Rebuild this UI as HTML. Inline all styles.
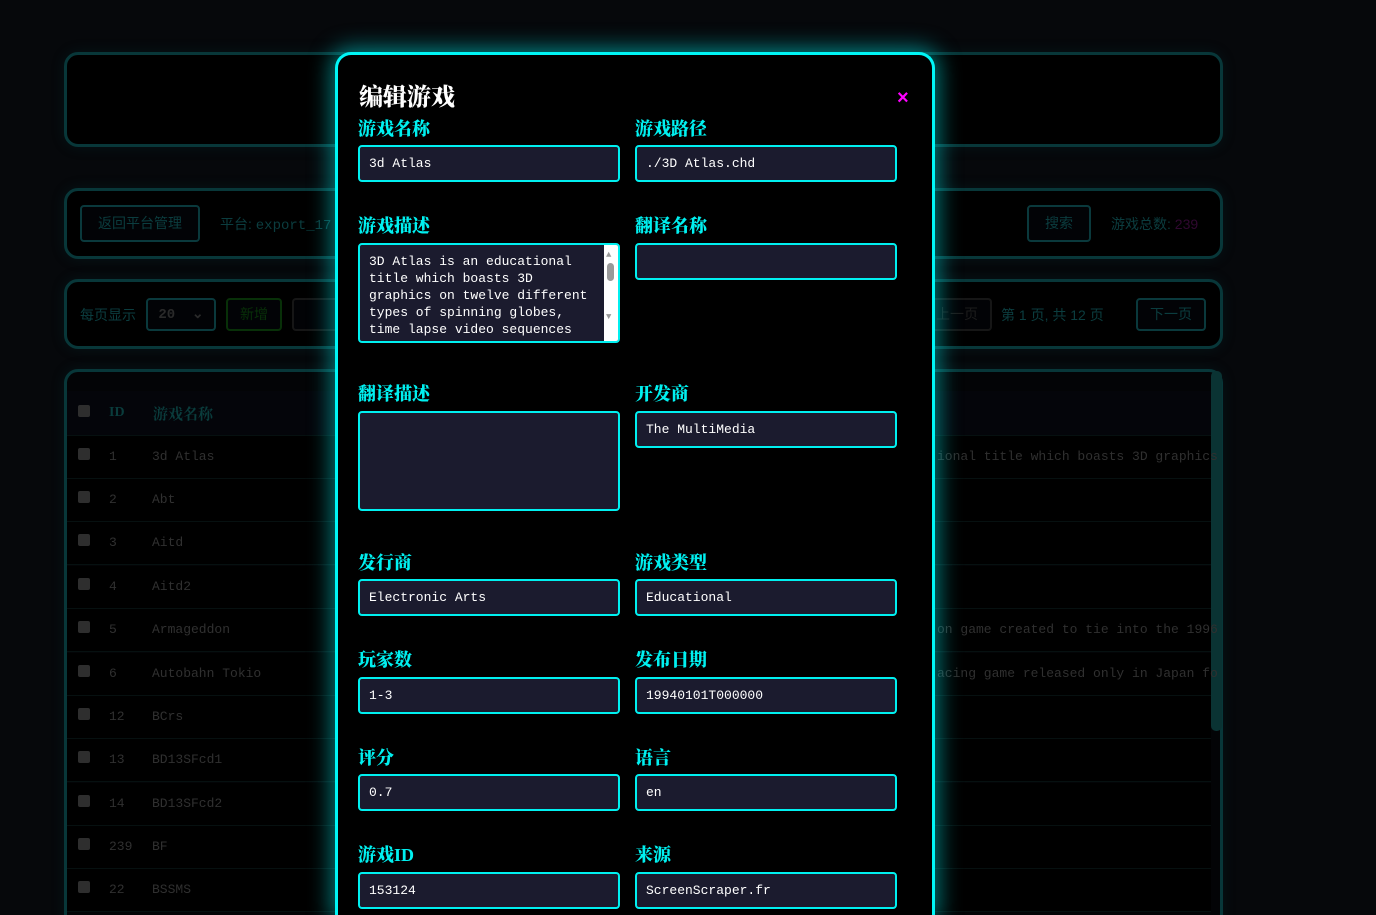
<!DOCTYPE html>
<html><head><meta charset="utf-8">
<style>
*{box-sizing:border-box;margin:0;padding:0}
html,body{width:1376px;height:915px;overflow:hidden;background:#06080b;font-family:"Liberation Mono","Noto Sans CJK SC",monospace}
#wrap{position:relative;width:1376px;height:915px;overflow:hidden}
.abs{position:absolute}
.panel{position:absolute;background:#000;border:3px solid #083739;border-radius:14px;box-shadow:0 0 14px rgba(0,80,80,.18)}
.btn{position:absolute;border:2px solid #0a393c;border-radius:4px;color:#0b3d3f;font-size:14px;font-family:"Liberation Sans","Noto Sans CJK SC",sans-serif;text-align:center;background:#020306}
.dim{color:#0b3d3f;font-size:14px}
.row{position:absolute;left:67px;width:1144px;height:43px;border-bottom:1px solid #061010;background:#000}
.cb{position:absolute;left:11px;top:12px;width:12px;height:12px;background:#2e2e2e;border-radius:2px}
.rid{position:absolute;left:42px;top:13px;color:#303030;font-size:13px}
.rname{position:absolute;left:85px;top:13px;color:#303030;font-size:13px;white-space:nowrap}
.modal{position:absolute;left:335px;top:52px;width:600px;height:863px;background:#000;border:3px solid #00f6f6;border-bottom:none;border-radius:16px 16px 0 0;box-shadow:0 0 22px 4px rgba(0,240,240,.5)}
.lab{position:absolute;color:#00f0f0;font-family:"Liberation Serif","Noto Serif CJK SC",serif;font-weight:900;font-size:18px}
.inp{position:absolute;width:262px;height:37px;background:#1b1b2e;border:2px solid #00f0f0;border-radius:4px;color:#fff;font-size:13px;padding:9px 0 0 9px;white-space:pre;overflow:hidden}
.ta{height:100px}
</style></head><body><div id="wrap">
<div class="panel" style="left:64px;top:52px;width:1159px;height:95px"></div>
<div class="abs" style="left:578px;top:80px;font-size:30px;color:#0e0e0e;font-family:'Liberation Serif','Noto Serif CJK SC',serif;font-weight:bold">游戏列表</div>
<div class="panel" style="left:64px;top:188px;width:1159px;height:71px"></div>
<div class="btn" style="left:80px;top:205px;width:120px;height:37px;line-height:33px">返回平台管理</div>
<div class="abs dim" style="left:220px;top:214px"><span style="font-family:'Liberation Sans','Noto Sans CJK SC'">平台: </span>export_17</div>
<div class="btn" style="left:1027px;top:205px;width:64px;height:37px;line-height:33px">搜索</div>
<div class="abs dim" style="left:1111px;top:214px;font-family:'Liberation Sans','Noto Sans CJK SC'">游戏总数: <span style="color:#300830">239</span></div>
<div class="panel" style="left:64px;top:279px;width:1159px;height:70px"></div>
<div class="abs dim" style="left:80px;top:305px;font-family:'Liberation Sans','Noto Sans CJK SC'">每页显示</div>
<div class="btn" style="left:146px;top:298px;width:70px;height:33px;line-height:30px;color:#2a2a2a;font-family:'Liberation Mono';font-weight:bold">20 &nbsp;⌄</div>
<div class="btn" style="left:226px;top:298px;width:56px;height:33px;line-height:29px;border-color:#083008;color:#083008">新增</div>
<div class="btn" style="left:292px;top:298px;width:50px;height:33px;border-color:#161616"></div>
<div class="btn" style="left:922px;top:298px;width:70px;height:33px;line-height:29px;border-color:#161616;color:#1c1c1c">上一页</div>
<div class="abs dim" style="left:1001px;top:305px;font-family:'Liberation Sans','Noto Sans CJK SC'">第 1 页, 共 12 页</div>
<div class="btn" style="left:1136px;top:298px;width:70px;height:33px;line-height:29px">下一页</div>
<div class="panel" style="left:64px;top:369px;width:1159px;height:560px;background:#030406"></div>
<div class="abs" style="left:1211px;top:371px;width:11px;height:360px;background:#0a3333;border-radius:5px"></div>
<div class="abs" style="left:67px;top:391px;width:1144px;height:45px;background:#04050a;border-bottom:1px solid #061010"></div>
<div class="cb abs" style="left:78px;top:405px"></div>
<div class="abs" style="left:109px;top:405px;color:#0a3c3c;font-weight:bold;font-size:14px;font-family:'Liberation Serif'">ID</div>
<div class="abs" style="left:153px;top:403px;color:#0a3c3c;font-weight:bold;font-size:15px;font-family:'Liberation Serif','Noto Serif CJK SC',serif">游戏名称</div>
<div class="row" style="top:436px"><div class="cb"></div><div class="rid">1</div><div class="rname">3d Atlas</div><div class="rname" style="left:870px">ional title which boasts 3D graphics</div></div>
<div class="row" style="top:479px"><div class="cb"></div><div class="rid">2</div><div class="rname">Abt</div></div>
<div class="row" style="top:522px"><div class="cb"></div><div class="rid">3</div><div class="rname">Aitd</div></div>
<div class="row" style="top:566px"><div class="cb"></div><div class="rid">4</div><div class="rname">Aitd2</div></div>
<div class="row" style="top:609px"><div class="cb"></div><div class="rid">5</div><div class="rname">Armageddon</div><div class="rname" style="left:870px">on game created to tie into the 1996</div></div>
<div class="row" style="top:653px"><div class="cb"></div><div class="rid">6</div><div class="rname">Autobahn Tokio</div><div class="rname" style="left:870px">acing game released only in Japan fo</div></div>
<div class="row" style="top:696px"><div class="cb"></div><div class="rid">12</div><div class="rname">BCrs</div></div>
<div class="row" style="top:739px"><div class="cb"></div><div class="rid">13</div><div class="rname">BD13SFcd1</div></div>
<div class="row" style="top:783px"><div class="cb"></div><div class="rid">14</div><div class="rname">BD13SFcd2</div></div>
<div class="row" style="top:826px"><div class="cb"></div><div class="rid">239</div><div class="rname">BF</div></div>
<div class="row" style="top:869px"><div class="cb"></div><div class="rid">22</div><div class="rname">BSSMS</div></div>

<div class="modal"></div>
<div class="abs" style="left:359px;top:77px;color:#fff;font-family:'Liberation Serif','Noto Serif CJK SC',serif;font-weight:900;font-size:24px">编辑游戏</div>
<div class="abs" style="left:897px;top:87px;color:#ff00ff;font-family:'Liberation Sans';font-weight:bold;font-size:20px">×</div>

<div class="lab" style="left:358px;top:115px">游戏名称</div>
<div class="lab" style="left:635px;top:115px">游戏路径</div>
<div class="inp" style="left:358px;top:145px">3d Atlas</div>
<div class="inp" style="left:635px;top:145px">./3D Atlas.chd</div>

<div class="lab" style="left:358px;top:212px">游戏描述</div>
<div class="lab" style="left:635px;top:212px">翻译名称</div>
<div class="inp ta" style="left:358px;top:243px;padding-top:8px;line-height:17px;white-space:normal;padding-right:20px">3D Atlas is an educational title which boasts 3D graphics on twelve different types of spinning globes, time lapse video sequences
<div class="abs" style="right:0;top:0;width:14px;height:96px;background:#fff"><div class="abs" style="left:3px;top:18px;width:7px;height:18px;background:#999;border-radius:4px"></div><div class="abs" style="left:2px;top:2px;font-size:9px;color:#999">▲</div><div class="abs" style="left:2px;top:64px;font-size:9px;color:#999">▼</div></div></div>
<div class="inp" style="left:635px;top:243px"></div>

<div class="lab" style="left:358px;top:380px">翻译描述</div>
<div class="lab" style="left:635px;top:380px">开发商</div>
<div class="inp ta" style="left:358px;top:411px"></div>
<div class="inp" style="left:635px;top:411px">The MultiMedia</div>

<div class="lab" style="left:358px;top:549px">发行商</div>
<div class="lab" style="left:635px;top:549px">游戏类型</div>
<div class="inp" style="left:358px;top:579px">Electronic Arts</div>
<div class="inp" style="left:635px;top:579px">Educational</div>

<div class="lab" style="left:358px;top:646px">玩家数</div>
<div class="lab" style="left:635px;top:646px">发布日期</div>
<div class="inp" style="left:358px;top:677px">1-3</div>
<div class="inp" style="left:635px;top:677px">19940101T000000</div>

<div class="lab" style="left:358px;top:744px">评分</div>
<div class="lab" style="left:635px;top:744px">语言</div>
<div class="inp" style="left:358px;top:774px">0.7</div>
<div class="inp" style="left:635px;top:774px">en</div>

<div class="lab" style="left:358px;top:841px">游戏ID</div>
<div class="lab" style="left:635px;top:841px">来源</div>
<div class="inp" style="left:358px;top:872px">153124</div>
<div class="inp" style="left:635px;top:872px">ScreenScraper.fr</div>
</div></body></html>
